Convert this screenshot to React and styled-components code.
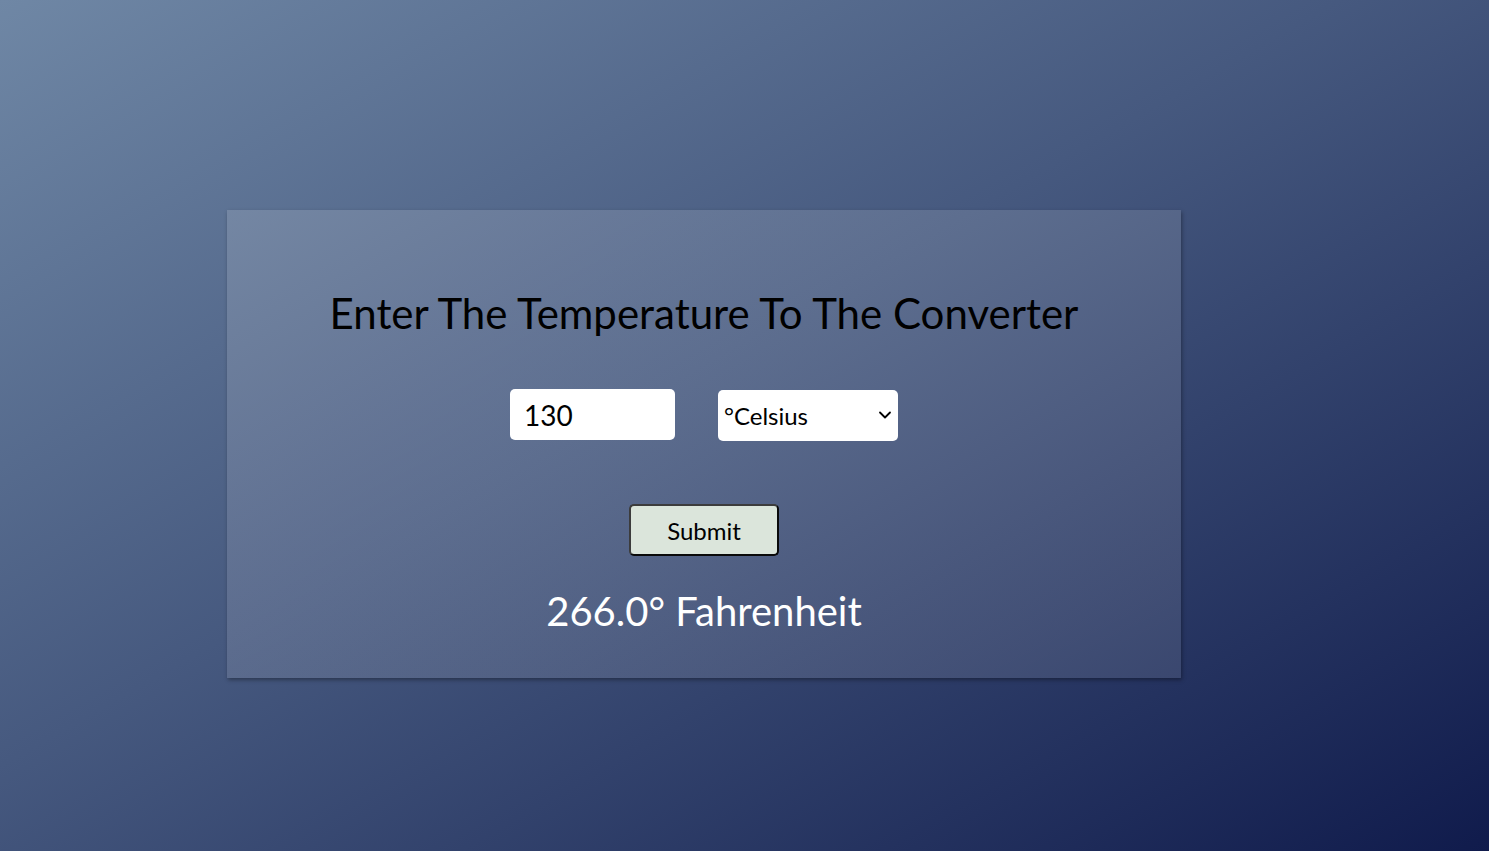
import React, { useState } from 'react';
import styled, { createGlobalStyle } from 'styled-components';
import { ChevronDown } from 'lucide-react';

const GlobalStyle = createGlobalStyle`
  html, body {
    margin: 0;
    padding: 0;
  }
  body {
    font-family: 'Lato', 'Open Sans', sans-serif;
  }
`;

const Page = styled.div`
  min-height: 100vh;
  box-sizing: border-box;
  padding: 210px 0 0 227px;
  background: linear-gradient(to bottom right, #6f87a5 0%, #46597f 45%, #101b4c 100%);
`;

const Card = styled.div`
  width: 954px;
  height: 468px;
  box-sizing: border-box;
  padding-top: 78px;
  display: flex;
  flex-direction: column;
  align-items: center;
  background: linear-gradient(to bottom right, rgba(255, 255, 255, 0.14), rgba(255, 255, 255, 0.1));
  box-shadow: 1px 2px 4px rgba(0, 0, 0, 0.35);
`;

const Title = styled.h1`
  margin: 0;
  font-size: 42px;
  font-weight: 400;
  line-height: 50px;
  color: #000;
`;

const Form = styled.form`
  display: flex;
  flex-direction: column;
  align-items: center;
`;

const Row = styled.div`
  display: flex;
  gap: 43px;
  margin-top: 51px;
`;

const Input = styled.input`
  width: 165px;
  height: 51px;
  box-sizing: border-box;
  border: none;
  border-radius: 5px;
  padding: 0 14px;
  font-family: inherit;
  font-size: 28px;
  color: #000;
  background: #fff;
  outline: none;
`;

const SelectWrap = styled.div`
  position: relative;
  margin-top: 1px;
`;

const Select = styled.select`
  appearance: none;
  width: 180px;
  height: 51px;
  box-sizing: border-box;
  border: none;
  border-radius: 5px;
  padding: 0 30px 0 6px;
  font-family: inherit;
  font-size: 24px;
  color: #000;
  background: #fff;
`;

const Arrow = styled(ChevronDown)`
  position: absolute;
  right: 3px;
  top: 15px;
  pointer-events: none;
  color: #000;
`;

const SubmitButton = styled.button`
  margin-top: 63px;
  width: 150px;
  height: 52px;
  box-sizing: border-box;
  border: 2px solid #0a0a0a;
  border-top-color: #3c3c3c;
  border-left-color: #3c3c3c;
  border-radius: 5px;
  background: #dbe5db;
  font-family: inherit;
  font-size: 24px;
  color: #000;
  cursor: pointer;
`;

const Result = styled.p`
  margin: 31px 0 0;
  font-size: 40px;
  line-height: 48px;
  color: #fff;
`;

function toOther(value, unit) {
  const n = parseFloat(value);
  if (Number.isNaN(n)) return '';
  if (unit === 'C') return `${(n * 9 / 5 + 32).toFixed(1)}° Fahrenheit`;
  return `${((n - 32) * 5 / 9).toFixed(1)}° Celsius`;
}

export default function App() {
  const [value, setValue] = useState('130');
  const [unit, setUnit] = useState('C');
  const [result, setResult] = useState(toOther('130', 'C'));

  function handleSubmit(event) {
    event.preventDefault();
    setResult(toOther(value, unit));
  }

  return (
    <>
      <GlobalStyle />
      <Page>
        <Card>
          <Title>Enter The Temperature To The Converter</Title>
          <Form onSubmit={handleSubmit}>
            <Row>
              <Input value={value} onChange={(e) => setValue(e.target.value)} />
              <SelectWrap>
                <Select value={unit} onChange={(e) => setUnit(e.target.value)}>
                  <option value="C">°Celsius</option>
                  <option value="F">°Fahrenheit</option>
                </Select>
                <Arrow size={20} strokeWidth={2.2} />
              </SelectWrap>
            </Row>
            <SubmitButton type="submit">Submit</SubmitButton>
          </Form>
          <Result>{result}</Result>
        </Card>
      </Page>
    </>
  );
}
